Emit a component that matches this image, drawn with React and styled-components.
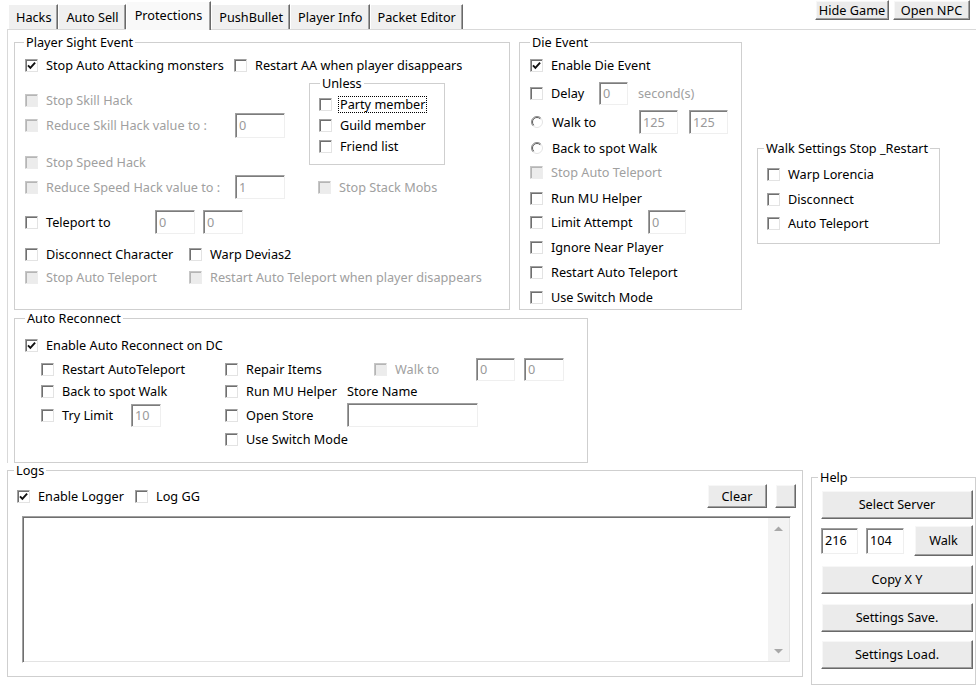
import React from 'react';
import styled, { createGlobalStyle, css } from 'styled-components';

const GlobalStyle = createGlobalStyle`
  html, body { margin: 0; padding: 0; background: #fff; }
  body {
    font-family: "Noto Sans", "Liberation Sans", sans-serif;
    font-size: 12.7px;
    color: #000;
  }
  * { box-sizing: border-box; }
`;

const Window = styled.div`
  width: 976px;
  height: 685px;
  overflow: hidden;
  background: #fff;
  display: flex;
  flex-direction: column;
`;

/* ---------- top strip: tabs + window buttons ---------- */

const TopStrip = styled.div`
  flex: none;
  height: 29px;
  display: flex;
  justify-content: space-between;
  align-items: flex-start;
`;

const TabList = styled.div`
  height: 29px;
  display: flex;
  align-items: flex-end;
  padding-left: 8px;
  position: relative;
  z-index: 1;
`;

const Tab = styled.div`
  flex: none;
  display: flex;
  align-items: center;
  white-space: nowrap;
  height: 25px;
  padding: 0 6px 0 7px;
  background: #f0f0f0;
  border-top: 1px solid #fff;
  border-left: 1px solid #fff;
  border-right: 1px solid #696969;
  box-shadow: inset -1px 0 0 #a0a0a0;
  line-height: 15px;
  ${(p) =>
    p.$active &&
    css`
      height: 29px;
      margin-bottom: -1px;
      padding: 0 8px 2px 8px;
      background: #f9f9f9;
    `}
`;

const TopButtons = styled.div`
  display: flex;
  gap: 4px;
  padding-right: 6px;
`;

const Button = styled.button`
  flex: none;
  width: ${(p) => p.$w}px;
  height: ${(p) => p.$h}px;
  margin: ${(p) => p.$mt || 0}px 0 0 ${(p) => p.$ml || 0}px;
  padding: 0;
  font: inherit;
  line-height: 15px;
  color: #000;
  background: #ebebeb;
  border: 1px solid;
  border-color: #fff #696969 #696969 #fff;
  box-shadow: inset -1px -1px 0 #a0a0a0, inset 1px 1px 0 #f7f7f7;
  display: flex;
  align-items: center;
  justify-content: center;
`;

/* ---------- tab page and group boxes ---------- */

const TabPage = styled.div`
  flex: none;
  margin-left: 7px;
  border-left: 1px solid #d9d9d9;
  border-top: 1px solid #d9d9d9;
  padding: 5px 0 0 6px;
  display: flex;
  flex-direction: column;
`;

const SectionRow = styled.div`
  display: flex;
  align-items: flex-start;
  flex: none;
`;

const Group = styled.fieldset`
  flex: none;
  width: ${(p) => p.$w}px;
  min-width: 0;
  margin: ${(p) => p.$mt || 0}px 0 0 ${(p) => p.$ml || 0}px;
  padding: 0;
  border: 1px solid #cfcfcf;
`;

const Legend = styled.legend`
  margin-left: ${(p) => p.$indent}px;
  padding: 0 2px;
  line-height: 14px;
  white-space: nowrap;
`;

const Body = styled.div`
  display: flex;
  flex-direction: column;
  padding: ${(p) => p.$pt || 0}px ${(p) => p.$pr || 0}px ${(p) => p.$pb || 0}px
    ${(p) => p.$pl || 0}px;
`;

const Row = styled.div`
  flex: none;
  display: flex;
  align-items: center;
  height: ${(p) => p.$h || 22}px;
  margin-top: ${(p) => p.$mt || 0}px;
  padding-left: ${(p) => p.$pl || 0}px;
  padding-right: ${(p) => p.$pr || 0}px;
`;

const Cell = styled.div`
  flex: none;
  width: ${(p) => p.$w}px;
  display: flex;
  align-items: center;
`;

const Split = styled.div`
  display: flex;
  align-items: flex-start;
`;

const Column = styled.div`
  flex: none;
  display: flex;
  flex-direction: column;
  ${(p) => p.$w && `width: ${p.$w}px;`}
`;

const Spacer = styled.div`
  flex: 1;
`;

/* ---------- controls ---------- */

const CheckLabel = styled.label`
  display: inline-flex;
  align-items: center;
  white-space: nowrap;
  line-height: 15px;
  color: ${(p) => (p.$disabled ? '#a0a0a0' : '#000')};
`;

const Box = styled.span`
  flex: none;
  width: 13px;
  height: 13px;
  margin-right: 8px;
  display: inline-flex;
  align-items: center;
  justify-content: center;
  background: #fff;
  border: 1px solid;
  border-color: #a0a0a0 #e3e3e3 #e3e3e3 #a0a0a0;
  box-shadow: inset 1px 1px 0 #6f6f6f;
  ${(p) =>
    p.$disabled &&
    css`
      background: #ececec;
      border-color: #c6c6c6 #ededed #ededed #c6c6c6;
      box-shadow: inset 1px 1px 0 #b5b5b5;
    `}
`;

const Caption = styled.span`
  padding: 0 1px;
  margin-left: -1px;
  ${(p) =>
    p.$focus &&
    css`
      outline: 1px dotted #000;
      outline-offset: 0;
    `}
`;

const RadioDot = styled.svg`
  flex: none;
  margin: 0 9px 0 1px;
`;

const TextBox = styled.div`
  flex: none;
  width: ${(p) => p.$w}px;
  height: ${(p) => p.$h || 23}px;
  margin-left: ${(p) => p.$ml || 0}px;
  padding-left: 3px;
  display: flex;
  align-items: center;
  line-height: 15px;
  background: #fff;
  color: ${(p) => (p.$muted ? '#9a9a9a' : '#000')};
  border: 1px solid;
  border-color: #a0a0a0 #efefef #efefef #a0a0a0;
  box-shadow: inset 1px 1px 0 #7c7c7c;
`;

const Muted = styled.span`
  margin-left: ${(p) => p.$ml || 0}px;
  color: #a0a0a0;
  white-space: nowrap;
  line-height: 15px;
`;

const Plain = styled.span`
  white-space: nowrap;
  line-height: 15px;
`;

const LogList = styled.div`
  flex: none;
  width: 769px;
  height: 147px;
  margin: 8px 0 0 14px;
  display: flex;
  justify-content: flex-end;
  background: #fff;
  border: 1px solid;
  border-color: #a0a0a0 #fff #fff #a0a0a0;
  box-shadow: inset 1px 1px 0 #6f6f6f, inset -1px -1px 0 #e3e3e3;
`;

const ScrollTrack = styled.div`
  width: 21px;
  margin: 1px 1px 1px 0;
  background: #f3f3f3;
  display: flex;
  flex-direction: column;
  justify-content: space-between;
  align-items: center;
  padding: 8px 0 7px;
`;

/* ---------- small pieces ---------- */

function CheckMark() {
  return (
    <svg width="9" height="9" viewBox="0 0 9 9">
      <path d="M1 4.3 L3.4 6.9 L8.1 1.6" fill="none" stroke="#111" strokeWidth="1.9" />
    </svg>
  );
}

function Check({ label, checked, disabled, focus }) {
  return (
    <CheckLabel $disabled={disabled}>
      <Box $disabled={disabled}>{checked && <CheckMark />}</Box>
      <Caption $focus={focus}>{label}</Caption>
    </CheckLabel>
  );
}

function Radio({ label }) {
  return (
    <CheckLabel>
      <RadioDot width="12" height="12" viewBox="0 0 12 12">
        <circle cx="6" cy="6" r="5.5" fill="#fff" stroke="#e3e3e3" />
        <path d="M9.9 2.1 A5.5 5.5 0 0 0 2.1 9.9" fill="none" stroke="#8e8e8e" />
        <path d="M9.2 2.8 A4.5 4.5 0 0 0 2.8 9.2" fill="none" stroke="#5e5e5e" />
      </RadioDot>
      <Caption>{label}</Caption>
    </CheckLabel>
  );
}

function Arrow({ down }) {
  return (
    <svg width="9" height="6" viewBox="0 0 9 6">
      <path d={down ? 'M0 1 H9 L4.5 5.5 Z' : 'M0 5 H9 L4.5 0.5 Z'} fill="#a8a8a8" />
    </svg>
  );
}

const tabs = ['Hacks', 'Auto Sell', 'Protections', 'PushBullet', 'Player Info', 'Packet Editor'];

export default function App() {
  return (
    <>
      <GlobalStyle />
      <Window>
        <TopStrip>
          <TabList>
            {tabs.map((t) => (
              <Tab key={t} $active={t === 'Protections'}>
                {t}
              </Tab>
            ))}
          </TabList>
          <TopButtons>
            <Button $w={74} $h={20}>Hide Game</Button>
            <Button $w={77} $h={20}>Open NPC</Button>
          </TopButtons>
        </TopStrip>

        <TabPage>
          <SectionRow>
            <Group $w={496}>
              <Legend $indent={9}>Player Sight Event</Legend>
              <Body $pl={10} $pb={21}>
                <Row $mt={5}>
                  <Cell $w={209}>
                    <Check checked label="Stop Auto Attacking monsters" />
                  </Cell>
                  <Check label="Restart AA when player disappears" />
                </Row>
                <Split>
                  <Column $w={284}>
                    <Row $mt={13}>
                      <Check disabled label="Stop Skill Hack" />
                    </Row>
                    <Row $mt={3}>
                      <Cell $w={210}>
                        <Check disabled label="Reduce Skill Hack value to :" />
                      </Cell>
                      <TextBox $w={50} $h={25} $muted>0</TextBox>
                    </Row>
                    <Row $mt={15}>
                      <Check disabled label="Stop Speed Hack" />
                    </Row>
                    <Row $mt={3}>
                      <Cell $w={210}>
                        <Check disabled label="Reduce Speed Hack value to :" />
                      </Cell>
                      <TextBox $w={50} $h={24} $muted>1</TextBox>
                    </Row>
                  </Column>
                  <Column>
                    <Group $w={136}>
                      <Legend $indent={10}>Unless</Legend>
                      <Body $pt={4} $pl={9} $pb={7}>
                        <Row $h={21}>
                          <Check focus label="Party member" />
                        </Row>
                        <Row $h={21}>
                          <Check label="Guild member" />
                        </Row>
                        <Row $h={21}>
                          <Check label="Friend list" />
                        </Row>
                      </Body>
                    </Group>
                    <Row $mt={11} $pl={9}>
                      <Check disabled label="Stop Stack Mobs" />
                    </Row>
                  </Column>
                </Split>
                <Row $mt={13}>
                  <Cell $w={130}>
                    <Check label="Teleport to" />
                  </Cell>
                  <TextBox $w={40} $h={24} $muted>0</TextBox>
                  <TextBox $w={40} $h={24} $ml={8} $muted>0</TextBox>
                </Row>
                <Row $mt={10}>
                  <Cell $w={164}>
                    <Check label="Disconnect Character" />
                  </Cell>
                  <Check label="Warp Devias2" />
                </Row>
                <Row $mt={1}>
                  <Cell $w={164}>
                    <Check disabled label="Stop Auto Teleport" />
                  </Cell>
                  <Check disabled label="Restart Auto Teleport when player disappears" />
                </Row>
              </Body>
            </Group>

            <Group $w={223} $ml={9}>
              <Legend $indent={10}>Die Event</Legend>
              <Body $pl={10} $pb={1}>
                <Row $mt={5}>
                  <Check checked label="Enable Die Event" />
                </Row>
                <Row $mt={6}>
                  <Cell $w={69}>
                    <Check label="Delay" />
                  </Cell>
                  <TextBox $w={29} $h={23} $muted>0</TextBox>
                  <Muted $ml={10}>second(s)</Muted>
                </Row>
                <Row $mt={7}>
                  <Cell $w={109}>
                    <Radio label="Walk to" />
                  </Cell>
                  <TextBox $w={39} $h={24} $muted>125</TextBox>
                  <TextBox $w={39} $h={24} $ml={11} $muted>125</TextBox>
                </Row>
                <Row $mt={4}>
                  <Radio label="Back to spot Walk" />
                </Row>
                <Row $mt={2}>
                  <Check disabled label="Stop Auto Teleport" />
                </Row>
                <Row $mt={4}>
                  <Check label="Run MU Helper" />
                </Row>
                <Row $mt={2}>
                  <Cell $w={118}>
                    <Check label="Limit Attempt" />
                  </Cell>
                  <TextBox $w={38} $h={24} $muted>0</TextBox>
                </Row>
                <Row $mt={3}>
                  <Check label="Ignore Near Player" />
                </Row>
                <Row $mt={3}>
                  <Check label="Restart Auto Teleport" />
                </Row>
                <Row $mt={3}>
                  <Check label="Use Switch Mode" />
                </Row>
              </Body>
            </Group>

            <Group $w={183} $ml={15} $mt={106}>
              <Legend $indent={6}>Walk Settings Stop _Restart</Legend>
              <Body $pl={9} $pb={9}>
                <Row $mt={8}>
                  <Check label="Warp Lorencia" />
                </Row>
                <Row $mt={3}>
                  <Check label="Disconnect" />
                </Row>
                <Row $mt={2}>
                  <Check label="Auto Teleport" />
                </Row>
              </Body>
            </Group>
          </SectionRow>

          <Group $w={574} $mt={1}>
            <Legend $indent={10}>Auto Reconnect</Legend>
            <Body $pl={10} $pb={12}>
              <Row $mt={9}>
                <Check checked label="Enable Auto Reconnect on DC" />
              </Row>
              <Row $mt={2} $pl={16}>
                <Cell $w={184}>
                  <Check label="Restart AutoTeleport" />
                </Cell>
                <Cell $w={149}>
                  <Check label="Repair Items" />
                </Cell>
                <Cell $w={102}>
                  <Check disabled label="Walk to" />
                </Cell>
                <TextBox $w={39} $h={23} $muted>0</TextBox>
                <TextBox $w={40} $h={23} $ml={9} $muted>0</TextBox>
              </Row>
              <Row $pl={16}>
                <Cell $w={184}>
                  <Check label="Back to spot Walk" />
                </Cell>
                <Cell $w={122}>
                  <Check label="Run MU Helper" />
                </Cell>
                <Plain>Store Name</Plain>
              </Row>
              <Row $mt={2} $pl={16}>
                <Cell $w={184}>
                  <Cell $w={90}>
                    <Check label="Try Limit" />
                  </Cell>
                  <TextBox $w={30} $h={23} $muted>10</TextBox>
                </Cell>
                <Cell $w={122}>
                  <Check label="Open Store" />
                </Cell>
                <TextBox $w={131} $h={24} />
              </Row>
              <Row $mt={2} $pl={16}>
                <Cell $w={184} />
                <Check label="Use Switch Mode" />
              </Row>
            </Body>
          </Group>
        </TabPage>

        <SectionRow>
          <Group $w={796} $ml={7}>
            <Legend $indent={6}>Logs</Legend>
            <Body $pb={13}>
              <Row $mt={7} $h={24} $pl={9} $pr={6}>
                <Cell $w={118}>
                  <Check checked label="Enable Logger" />
                </Cell>
                <Check label="Log GG" />
                <Spacer />
                <Button $w={60} $h={24}>Clear</Button>
                <Button $w={21} $h={24} $ml={8} />
              </Row>
              <LogList>
                <ScrollTrack>
                  <Arrow />
                  <Arrow down />
                </ScrollTrack>
              </LogList>
            </Body>
          </Group>

          <Group $w={165} $ml={8} $mt={7}>
            <Legend $indent={6}>Help</Legend>
            <Body $pl={9} $pb={15}>
              <Button $w={152} $h={29} $mt={6}>Select Server</Button>
              <Row $mt={6} $h={31}>
                <TextBox $w={37} $h={26}>216</TextBox>
                <TextBox $w={38} $h={26} $ml={8}>104</TextBox>
                <Button $w={59} $h={31} $ml={10}>Walk</Button>
              </Row>
              <Button $w={152} $h={29} $mt={9}>Copy X Y</Button>
              <Button $w={152} $h={29} $mt={9}>Settings Save.</Button>
              <Button $w={152} $h={29} $mt={8}>Settings Load.</Button>
            </Body>
          </Group>
        </SectionRow>
      </Window>
    </>
  );
}
